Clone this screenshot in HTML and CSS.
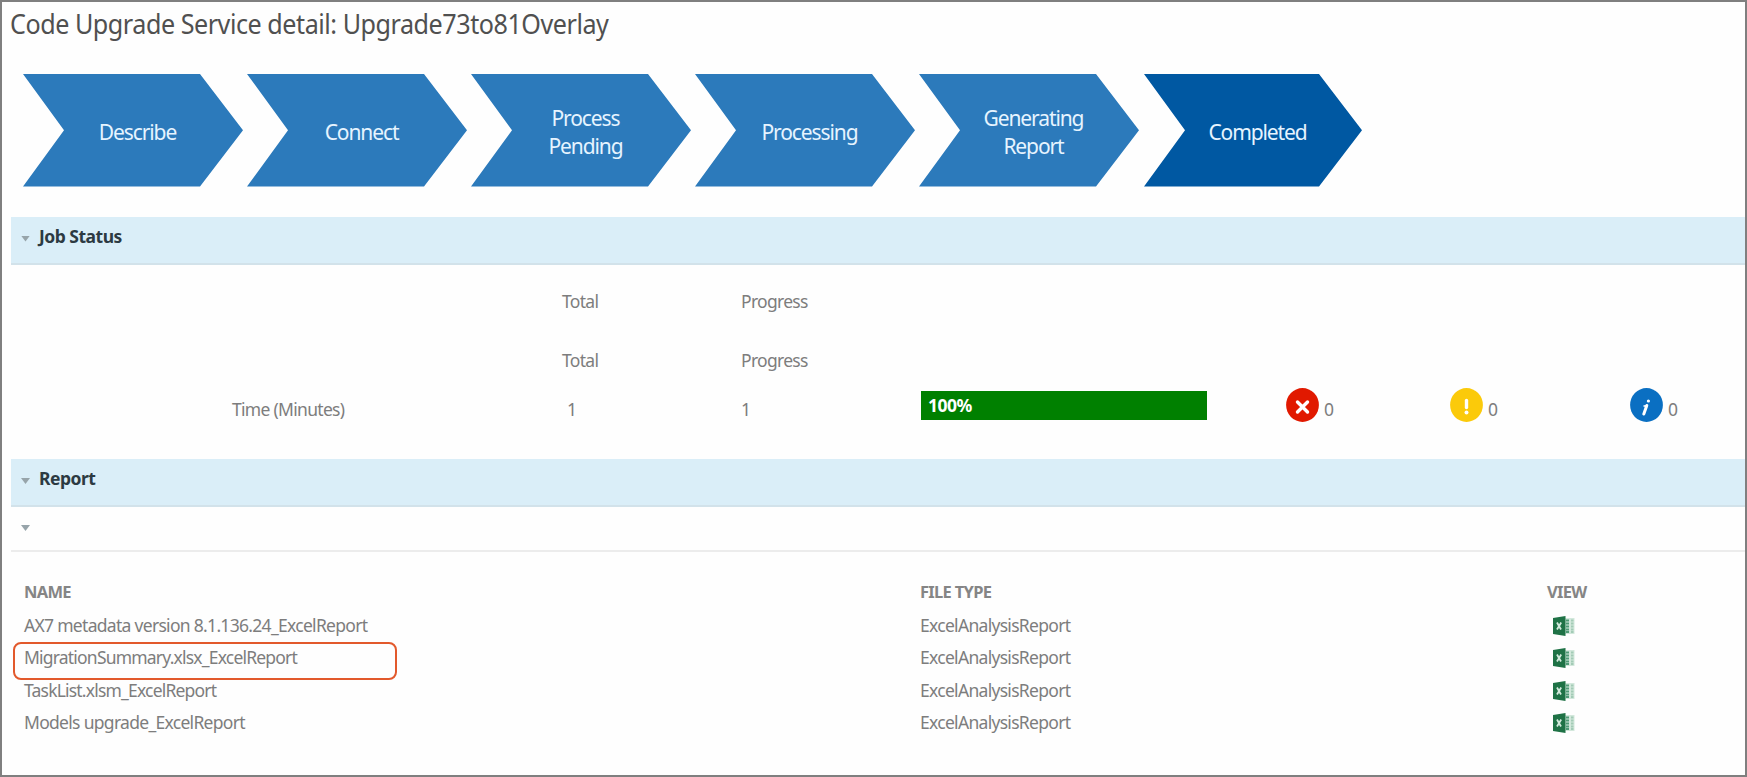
FILE: index.html
```html
<!DOCTYPE html>
<html lang="en">
<head>
<meta charset="utf-8">
<title>Code Upgrade Service detail</title>
<link rel="stylesheet" href="styles.css">
</head>
<body>
<svg class="defs" width="0" height="0">
  <symbol id="excel" viewBox="0 0 22 22">
    <rect x="11" y="3" width="10.5" height="16" fill="#d3e8dc"/>
    <path d="M13 5.5h3M13 8.5h3M13 11.5h3M13 14.5h3M13 17h3" stroke="#4f9a76" stroke-width="1.8"/>
    <path d="M18 5.5h2.5M18 8.5h2.5M18 11.5h2.5M18 14.5h2.5M18 17h2.5" stroke="#a3cbb6" stroke-width="1.8"/>
    <path d="M0 3L12.5 1v20L0 19z" fill="#1f7246"/>
    <path d="M4 7.5l4 7M8.2 7.5l-4.2 7" stroke="#d3eadd" stroke-width="1.8"/>
  </symbol>
</svg>
<main class="page">
  <h1 class="title">Code Upgrade Service detail: Upgrade73to81Overlay</h1>
  <ol class="steps">
    <li class="step"><span>Describe</span></li>
    <li class="step"><span>Connect</span></li>
    <li class="step"><span>Process<br>Pending</span></li>
    <li class="step"><span>Processing</span></li>
    <li class="step"><span>Generating<br>Report</span></li>
    <li class="step current"><span>Completed</span></li>
  </ol>
  <h2 class="band"><i class="caret"></i>Job Status</h2>
  <section class="status">
    <div class="status-row head"><span></span><span>Total</span><span>Progress</span></div>
    <div class="status-row head second"><span></span><span>Total</span><span>Progress</span></div>
    <div class="status-row values">
      <span class="label">Time (Minutes)</span><span class="num">1</span><span>1</span>
      <div class="bar"><b>100%</b></div>
      <div class="count error"><svg width="33" height="34" viewBox="0 0 33 34"><ellipse cx="16.5" cy="17" rx="16.4" ry="16.9" fill="#e11900"/><path d="M11.5 14l10 10M21.5 14l-10 10" stroke="#fff" stroke-width="3.4" stroke-linecap="round"/></svg><span>0</span></div>
      <div class="count warning"><svg width="33" height="34" viewBox="0 0 33 34"><ellipse cx="16.5" cy="17" rx="16.4" ry="16.9" fill="#fbca0a"/><path d="M16.5 12.5v7" stroke="#fff" stroke-width="3.4" stroke-linecap="round"/><circle cx="16.5" cy="24.5" r="2" fill="#fff"/></svg><span>0</span></div>
      <div class="count info"><svg width="33" height="34" viewBox="0 0 33 34"><ellipse cx="16.5" cy="17" rx="16.4" ry="16.9" fill="#0a6fc2"/><path d="M16.8 17.5l-3 8.5" fill="none" stroke="#fff" stroke-width="3" stroke-linecap="round"/><path d="M13.5 18h3" stroke="#fff" stroke-width="1.6"/><circle cx="18.4" cy="13" r="1.6" fill="#fff"/></svg><span>0</span></div>
    </div>
  </section>
  <h2 class="band"><i class="caret"></i>Report</h2>
  <div class="subsection"><i class="caret"></i></div>
  <section class="report">
    <div class="report-row report-head"><span>NAME</span><span>FILE TYPE</span><span class="view">VIEW</span></div>
    <div class="report-row"><span>AX7 metadata version 8.1.136.24_ExcelReport</span><span>ExcelAnalysisReport</span><svg class="excel"><use href="#excel"/></svg></div>
    <div class="report-row selected"><span class="tight">MigrationSummary.xlsx_ExcelReport</span><span>ExcelAnalysisReport</span><svg class="excel"><use href="#excel"/></svg></div>
    <div class="report-row"><span class="tight">TaskList.xlsm_ExcelReport</span><span>ExcelAnalysisReport</span><svg class="excel"><use href="#excel"/></svg></div>
    <div class="report-row"><span>Models upgrade_ExcelReport</span><span>ExcelAnalysisReport</span><svg class="excel"><use href="#excel"/></svg></div>
  </section>
</main>
</body>
</html>
```
FILE: styles.css
```css
*, *::before { box-sizing: border-box; }
body { margin: 0; background: #fdfdfd; }
.defs { position: absolute; }
.page {
  height: 777px;
  border: 2px solid #7f7f7f;
  padding-left: 9px;
  overflow: hidden;
  background: #fefefe;
  font: 17.5px/24px "Noto Sans", "Open Sans", sans-serif;
  letter-spacing: -0.7px;
  color: #7d7d7d;
}
.title {
  margin: 2px 0 0 -1px;
  height: 70px;
  font-size: 27px;
  line-height: 39px;
  font-weight: 400;
  letter-spacing: -0.5px;
  transform: scaleX(0.931);
  transform-origin: 0 0;
  color: #505050;
}
.steps { display: flex; gap: 4px; margin: 0 0 30px 12px; padding: 0; list-style: none; }
.step {
  width: 220px;
  height: 112.5px;
  display: flex;
  align-items: center;
  justify-content: center;
  padding: 3px 0 0 9px;
  background: #2c7abb;
  color: #e6f4ff;
  font-size: 21px;
  line-height: 28px;
  letter-spacing: -1.1px;
  text-align: center;
  clip-path: polygon(0 0, 177px 0, 100% 50%, 177px 100%, 0 100%, 41px 50%);
}
.current { width: 218px; margin-left: 1px; background: #0058a2; clip-path: polygon(0 0, 175px 0, 100% 50%, 175px 100%, 0 100%, 41px 50%); }
.band {
  display: flex;
  align-items: flex-start;
  margin: 0;
  height: 48px;
  padding: 7px 0 0 10px;
  border-bottom: 2px solid #d2e2ea;
  background: #daeef8;
  color: #2c3a42;
  font-size: 17.5px;
  font-weight: 700;
  line-height: 24px;
  letter-spacing: -0.5px;
}
.caret { width: 9px; height: 6px; margin: 12px 9px 0 0; background: #97a4aa; clip-path: polygon(0 0, 100% 0, 50% 100%); }
.status { height: 194.5px; padding-top: 24px; }
.status-row { display: grid; grid-template-columns: 551px 179px 179px 286px 1fr; height: 24px; }
.status-row.second { margin-top: 35px; }
.status-row.values { grid-template-columns: 551px 179px 179px 287px 79px 164px 180px 1fr; height: 36px; margin-top: 16px; }
.values > span { padding-top: 9px; }
.values > .label { padding-left: 221px; }
.num { padding-left: 5px; }
.bar { height: 29px; margin: 3px 0 0 1px; padding-left: 7px; background: #008000; color: #fff; line-height: 29px; letter-spacing: -0.5px; }
.count { display: flex; gap: 5px; }
.error { grid-column: 6; }
.warning { grid-column: 7; }
.info { grid-column: 8; }
.count svg { flex: none; }
.count span { padding-top: 9px; }
.subsection { display: flex; height: 45px; padding: 6px 0 0 10px; border-bottom: 2px solid #ececec; }
.report { padding: 27px 0 0 3px; }
.report-row { position: relative; display: grid; grid-template-columns: 896px 632px 1fr; height: 32.3px; padding-left: 10px; line-height: 24px; }
.report-head { height: 34px; padding-top: 1px; font-size: 16.5px; font-weight: 700; color: #858585; }
.tight { letter-spacing: -0.8px; }
.view { margin-left: -5px; }
.excel { width: 22px; height: 22px; margin: 2px 0 0 1px; }
.selected::before { content: ""; position: absolute; left: -1px; top: -3px; width: 384px; height: 38px; border: 2px solid #e2592c; border-radius: 8px; }
```
